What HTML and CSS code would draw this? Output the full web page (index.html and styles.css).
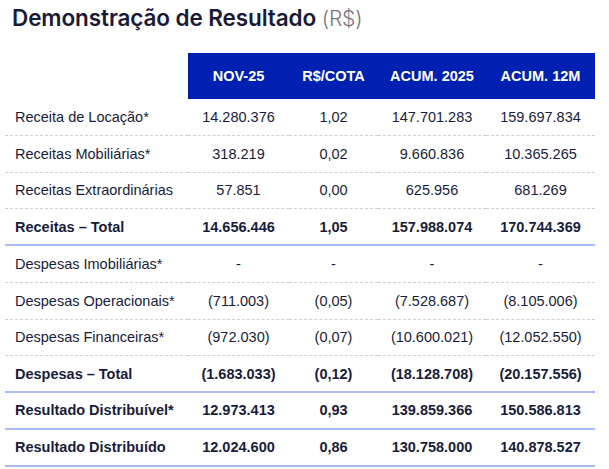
FILE: index.html
```html
<!DOCTYPE html>
<html lang="pt-BR">
<head>
<meta charset="utf-8">
<link rel="stylesheet" href="styles.css">
</head>
<body>
<h1 class="title">Demonstração de Resultado <span class="unit">(R$)</span></h1>
<table class="dre">
  <colgroup>
    <col class="c-label"><col class="c1"><col class="c2"><col class="c3"><col class="c4">
  </colgroup>
  <thead>
    <tr>
      <th class="blank"></th>
      <th>NOV-25</th>
      <th>R$/COTA</th>
      <th>ACUM. 2025</th>
      <th>ACUM. 12M</th>
    </tr>
  </thead>
  <tbody>
    <tr class="dash"><td>Receita de Locação*</td><td>14.280.376</td><td>1,02</td><td>147.701.283</td><td>159.697.834</td></tr>
    <tr class="dash"><td>Receitas Mobiliárias*</td><td>318.219</td><td>0,02</td><td>9.660.836</td><td>10.365.265</td></tr>
    <tr class="dash"><td>Receitas Extraordinárias</td><td>57.851</td><td>0,00</td><td>625.956</td><td>681.269</td></tr>
    <tr class="total"><td>Receitas – Total</td><td>14.656.446</td><td>1,05</td><td>157.988.074</td><td>170.744.369</td></tr>
    <tr class="dash"><td>Despesas Imobiliárias*</td><td>-</td><td>-</td><td>-</td><td>-</td></tr>
    <tr class="dash"><td>Despesas Operacionais*</td><td>(711.003)</td><td>(0,05)</td><td>(7.528.687)</td><td>(8.105.006)</td></tr>
    <tr class="dash"><td>Despesas Financeiras*</td><td>(972.030)</td><td>(0,07)</td><td>(10.600.021)</td><td>(12.052.550)</td></tr>
    <tr class="total"><td>Despesas – Total</td><td>(1.683.033)</td><td>(0,12)</td><td>(18.128.708)</td><td>(20.157.556)</td></tr>
    <tr class="total"><td>Resultado Distribuível*</td><td>12.973.413</td><td>0,93</td><td>139.859.366</td><td>150.586.813</td></tr>
    <tr class="total"><td>Resultado Distribuído</td><td>12.024.600</td><td>0,86</td><td>130.758.000</td><td>140.878.527</td></tr>
  </tbody>
</table>
</body>
</html>
```
FILE: styles.css
```css
html, body {
  margin: 0;
  padding: 0;
  background: #ffffff;
}
body {
  font-family: "Liberation Sans", Arial, sans-serif;
  color: #181c3c;
}
.title {
  margin: 0;
  padding: 3.5px 0 0 12px;
  height: 53px;
  box-sizing: border-box;
  font-family: Inter, "Noto Sans", sans-serif;
  font-size: 22.5px;
  line-height: 28px;
  font-weight: 600;
  color: #191a38;
  letter-spacing: -0.1px;
}
.unit {
  font-weight: 300;
  font-size: 21px;
  color: #76767f;
}
.dre {
  margin-left: 5px;
  width: 590px;
  table-layout: fixed;
  border-collapse: separate;
  border-spacing: 0;
  font-size: 14.5px;
}
.c-label { width: 183px; }
.c1 { width: 101px; }
.c2 { width: 89px; }
.c3 { width: 108px; }
.c4 { width: 109px; }
.dre th {
  background: #0020b2;
  color: #ffffff;
  font-weight: 700;
  font-size: 14.5px;
  height: 46px;
  padding: 0;
  text-align: center;
}
.dre th.blank {
  background: transparent;
}
.dre td {
  height: 36.75px;
  box-sizing: border-box;
  padding: 0;
  text-align: center;
  white-space: nowrap;
}
.dre td:first-child {
  text-align: left;
  padding-left: 10px;
}
.dash td {
  border-bottom: 1px dashed #cfcfd4;
}
.total td {
  font-weight: 700;
  border-bottom: 2px solid #a9b9f2;
}
```
